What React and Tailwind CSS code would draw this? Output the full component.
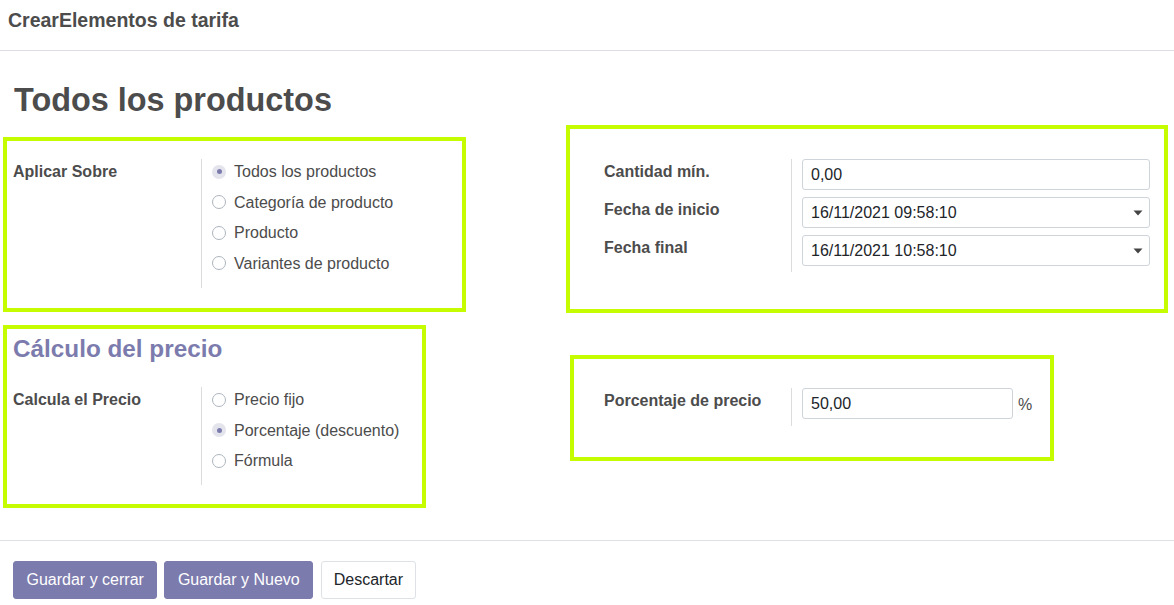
const FONT = "font-['Liberation_Sans',Arial,sans-serif]";

function Radio({ checked, label }) {
    return (
        <div className="flex items-center h-[25px] gap-[8px]">
            {checked ? (
                <span className="w-[14px] h-[14px] rounded-full bg-[#e4e4ec] flex items-center justify-center shrink-0">
                    <span className="w-[5px] h-[5px] rounded-full bg-[#7c7bad]" />
                </span>
            ) : (
                <span className="w-[14px] h-[14px] rounded-full border border-[#adb5bd] bg-white shrink-0" />
            )}
            <span className="text-[16px] leading-[25px] text-[#4c4c4c]">{label}</span>
        </div>
    );
}

function Caret() {
    return (
        <svg width="10" height="6" viewBox="0 0 10 6" className="shrink-0">
            <path d="M0.5 0.5 L9.5 0.5 L5 5.5 Z" fill="#444" />
        </svg>
    );
}

function Field({ value, select, width = 'w-[348px]' }) {
    return (
        <div className={`${width} h-[31px] border border-[#ced4da] rounded-[3px] bg-white flex items-center pl-[8px] pr-[6px] justify-between`}>
            <span className="text-[16px] text-[#212529]">{value}</span>
            {select && <Caret />}
        </div>
    );
}

export default function App() {
    return (
        <div className={`${FONT} w-[1174px] h-[605px] bg-white text-[#4c4c4c] overflow-hidden`}>
            {/* cabecera */}
            <header className="h-[51px] border-b border-[#dddde6] px-[8px] pt-[8px]">
                <h2 className="text-[19.5px] leading-[24px] font-bold text-[#4c4c4c]">CrearElementos de tarifa</h2>
            </header>

            <div className="h-[489px] pt-[30px]">
                <h1 className="ml-[14px] text-[32.4px] leading-[38px] font-bold text-[#4c4c4c]">Todos los productos</h1>

                {/* fila 1 */}
                <div className="flex items-start mt-[6px]">
                    <div className="ml-[3px] mt-[12px] w-[463px] h-[175px] border-[4px] border-[#c6fc00] flex pt-[18px]">
                        <div className="w-[194px] pl-[6px] text-[16px] leading-[25px] font-bold">Aplicar Sobre</div>
                        <div className="border-l border-[#dcdcdc] pl-[10px] pb-[11px] flex flex-col gap-[5.5px] h-[129px]">
                            <Radio checked label="Todos los productos" />
                            <Radio label="Categoría de producto" />
                            <Radio label="Producto" />
                            <Radio label="Variantes de producto" />
                        </div>
                    </div>

                    <div className="ml-[100px] w-[602px] h-[188px] border-[4px] border-[#c6fc00] flex pt-[30px]">
                        <div className="w-[221px] pl-[34px] flex flex-col gap-[7px]">
                            <div className="h-[31px] text-[16px] leading-[25px] font-bold">Cantidad mín.</div>
                            <div className="h-[31px] text-[16px] leading-[25px] font-bold">Fecha de inicio</div>
                            <div className="h-[31px] text-[16px] leading-[25px] font-bold">Fecha final</div>
                        </div>
                        <div className="border-l border-[#dcdcdc] pl-[10px] pb-[6px] flex flex-col gap-[7px] self-start">
                            <Field value="0,00" />
                            <Field value="16/11/2021 09:58:10" select />
                            <Field value="16/11/2021 10:58:10" select />
                        </div>
                    </div>
                </div>

                {/* fila 2 */}
                <div className="flex items-start mt-[12px]">
                    <div className="ml-[3px] w-[423px] h-[183px] border-[4px] border-[#c6fc00] pt-[5px]">
                        <h3 className="pl-[6px] text-[24.3px] leading-[29px] font-bold text-[#7c7bad]">Cálculo del precio</h3>
                        <div className="flex mt-[24px]">
                            <div className="w-[194px] pl-[6px] text-[16px] leading-[25px] font-bold">Calcula el Precio</div>
                            <div className="border-l border-[#dcdcdc] pl-[10px] pb-[11px] flex flex-col gap-[5.5px] h-[98px]">
                                <Radio label="Precio fijo" />
                                <Radio checked label="Porcentaje (descuento)" />
                                <Radio label="Fórmula" />
                            </div>
                        </div>
                    </div>

                    <div className="ml-[144px] mt-[30px] w-[484px] h-[106px] border-[4px] border-[#c6fc00] flex pt-[29px]">
                        <div className="w-[217px] pl-[30px] text-[16px] leading-[25px] font-bold">Porcentaje de precio</div>
                        <div className="border-l border-[#dcdcdc] pl-[10px] h-[38px] flex items-start">
                            <Field value="50,00" width="w-[211px]" />
                            <span className="ml-[5px] mt-[4px] text-[16px] leading-[25px]">%</span>
                        </div>
                    </div>
                </div>
            </div>

            {/* pie */}
            <footer className="border-t border-[#dee2e6] px-[13px] pt-[20px] flex gap-[7px]">
                <button className="h-[38px] px-[12.5px] rounded-[3px] bg-[#7c7bad] border border-[#7c7bad] text-white text-[16px]">Guardar y cerrar</button>
                <button className="h-[38px] px-[12.5px] rounded-[3px] bg-[#7c7bad] border border-[#7c7bad] text-white text-[16px]">Guardar y Nuevo</button>
                <button className="ml-[1px] h-[38px] px-[11.5px] rounded-[3px] bg-white border border-[#dee2e6] text-[#212529] text-[16px]">Descartar</button>
            </footer>
        </div>
    );
}
